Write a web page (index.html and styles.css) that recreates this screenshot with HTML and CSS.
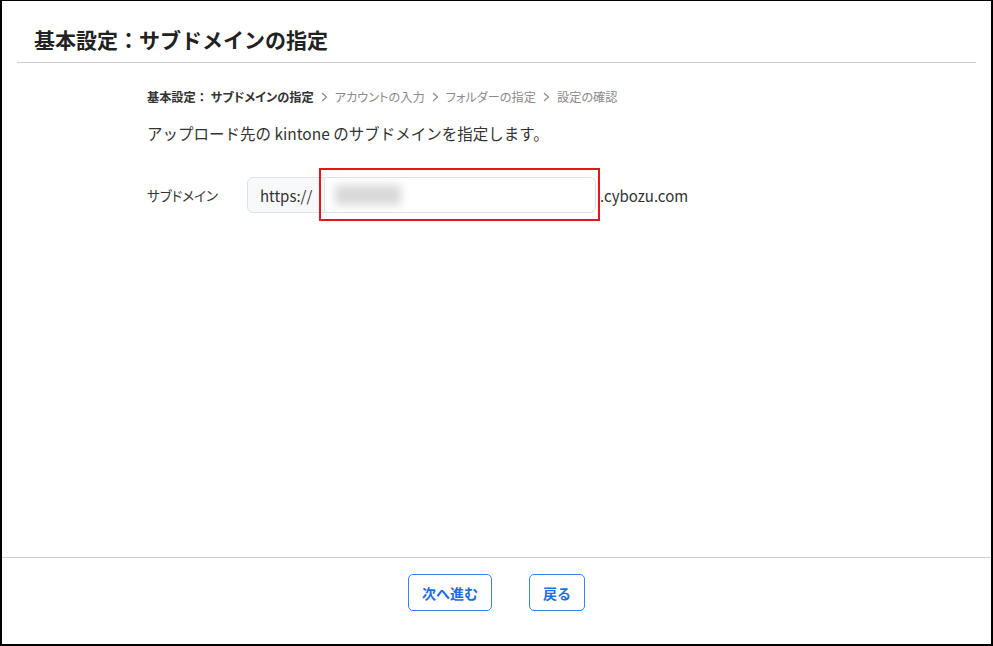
FILE: index.html
```html
<!DOCTYPE html>
<html lang="ja">
<head>
<meta charset="UTF-8">
<meta name="viewport" content="width=device-width, initial-scale=1.0">
<title>基本設定</title>
<link rel="stylesheet" href="styles.css">
</head>
<body>
<div class="window">
    <div class="header">
        <h1 class="title">基本設定：サブドメインの指定</h1>
    </div>
    <div class="content">
        <div class="steps">
            <span class="step current"><span class="colon">基本設定：</span> サブドメインの指定</span>
            <svg class="sep" width="7" height="10" viewBox="0 0 7 10"><path d="M1 1l4.5 4L1 9" fill="none" stroke="#8a8a8a" stroke-width="1.2"/></svg>
            <span class="step">アカウントの入力</span>
            <svg class="sep" width="7" height="10" viewBox="0 0 7 10"><path d="M1 1l4.5 4L1 9" fill="none" stroke="#8a8a8a" stroke-width="1.2"/></svg>
            <span class="step">フォルダーの指定</span>
            <svg class="sep" width="7" height="10" viewBox="0 0 7 10"><path d="M1 1l4.5 4L1 9" fill="none" stroke="#8a8a8a" stroke-width="1.2"/></svg>
            <span class="step">設定の確認</span>
        </div>
        <p class="lead">アップロード先の kintone のサブドメインを指定します。</p>
        <div class="form-row">
            <label class="label">サブドメイン</label>
            <div class="input-group">
                <span class="addon">https://</span>
                <div class="input-wrap">
                    <div class="input"><span class="blurred"></span></div>
                </div>
            </div>
            <span class="suffix">.cybozu.com</span>
        </div>
    </div>
    <div class="footer">
        <button class="button">次へ進む</button>
        <button class="button">戻る</button>
    </div>
</div>
</body>
</html>
```

FILE: styles.css
```css
* {
    box-sizing: border-box;
}

body {
    margin: 0;
    font-family: "Noto Sans CJK JP", "Noto Sans", sans-serif;
    color: #333;
    background-color: #fff;
}

.window {
    display: flex;
    flex-direction: column;
    height: 646px;
    border-style: solid;
    border-color: #000;
    border-width: 1px 2px 2px 2px;
}

.header {
    margin: 0 15px;
    padding: 24px 17px 8px;
    border-bottom: 1px solid #ccc;
}

.title {
    margin: 0;
    font-size: 21px;
    font-weight: bold;
    line-height: 29px;
    color: #222;
}

.content {
    flex: 1;
    padding: 24px 0 0 145px;
}

.steps {
    display: flex;
    align-items: center;
    gap: 7px;
    font-size: 12.2px;
    line-height: 20px;
    color: #8a8a8a;
    font-feature-settings: "palt";
}

.step.current {
    font-weight: bold;
    color: #333;
}

.colon {
    font-feature-settings: normal;
}

.sep {
    flex-shrink: 0;
}

.lead {
    margin: 13px 0 0;
    font-size: 15.5px;
    line-height: 26px;
    color: #333;
}

.form-row {
    display: flex;
    align-items: center;
    margin-top: 31px;
}

.label {
    width: 100px;
    font-size: 13.5px;
    color: #333;
    font-feature-settings: "palt";
}

.input-group {
    display: flex;
}

.addon {
    display: flex;
    align-items: center;
    width: 78px;
    height: 36px;
    padding-left: 12px;
    font-size: 15px;
    background-color: #f8f9fa;
    border: 1px solid #dee2e6;
    border-radius: 6px 0 0 6px;
}

.input-wrap {
    position: relative;
}

.input-wrap::after {
    content: "";
    position: absolute;
    top: -9px;
    bottom: -8px;
    left: -6px;
    right: -4px;
    border: 2px solid #e8141c;
}

.input {
    display: flex;
    align-items: center;
    width: 271px;
    height: 36px;
    padding-left: 10px;
    border: 1px solid #dee2e6;
    border-left: none;
    border-radius: 0 6px 6px 0;
    background-color: #fff;
}

.blurred {
    width: 66px;
    height: 20px;
    background-color: #d8d8d8;
    filter: blur(5px);
}

.suffix {
    margin-left: 4px;
    font-size: 15px;
    color: #333;
}

.footer {
    display: flex;
    justify-content: center;
    gap: 37px;
    height: 87px;
    padding-top: 16px;
    border-top: 1px solid #ccc;
}

.button {
    height: 37px;
    padding: 0 13px;
    font-family: inherit;
    font-size: 14px;
    font-weight: bold;
    color: #1a6fe0;
    background-color: #fff;
    border: 1px solid #3b82e8;
    border-radius: 5px;
    cursor: pointer;
}
```
